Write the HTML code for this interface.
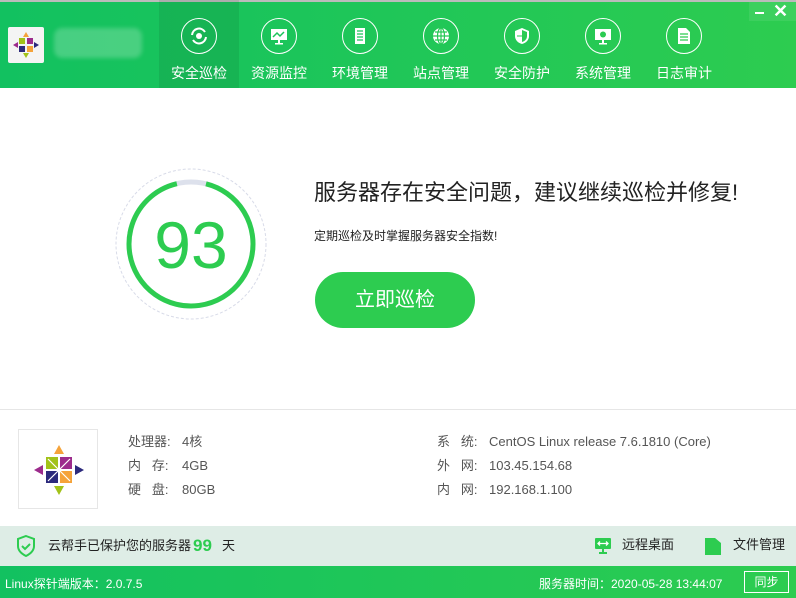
<!DOCTYPE html>
<html><head><meta charset="utf-8"><style>
*{margin:0;padding:0;box-sizing:border-box}
body{width:796px;height:598px;overflow:hidden;position:relative;font-family:"Liberation Sans","Noto Sans CJK SC",sans-serif;background:#fff}
.hdr{position:absolute;left:0;top:0;width:796px;height:88px;background:linear-gradient(90deg,#12c160,#2dcc50)}
.tab{position:absolute;top:0;width:80px;height:88px;color:#fff;font-size:14px;text-align:center}
.tab .c{position:absolute;left:22px;top:18px;width:36px;height:36px;border:1.5px solid #fff;border-radius:50%}
.tab .c svg{position:absolute;left:8px;top:8px}
.tab span{position:absolute;left:0;right:0;top:63px}
.abs{position:absolute}
.lbl{font-size:13px;color:#555}
</style></head><body>
<div class="hdr"></div>
<div class="abs" style="left:0;top:0;width:796px;height:2px;background:#bbb"></div>
<div class="abs" style="left:8px;top:27px;width:36px;height:36px;background:#f4f4f4;border-radius:2px">
<svg width="36" height="36" viewBox="0 0 36 36"><rect x="11" y="11" width="6" height="6" fill="#a2c219"/><rect x="19" y="11" width="6" height="6" fill="#9c2b8c"/><rect x="11" y="19" width="6" height="6" fill="#2c2a7c"/><rect x="19" y="19" width="6" height="6" fill="#f5a33a"/><path d="M18 5l3 5h-6z" fill="#f5a33a"/><path d="M18 31l3-5h-6z" fill="#a2c219"/><path d="M5 18l5-3v6z" fill="#9c2b8c"/><path d="M31 18l-5-3v6z" fill="#2c2a7c"/></svg></div>
<div class="abs" style="left:54px;top:28px;width:88px;height:30px;background:rgba(255,255,255,.22);border-radius:8px;filter:blur(2px)"></div>
<div class="abs" style="left:159px;top:0;width:80px;height:88px;background:rgba(0,0,0,.08)"></div>
<div class="tab" style="left:159px"><div class="c"><svg width="18" height="18" viewBox="0 0 18 18"><circle cx="9" cy="9" r="3" fill="#fff"/><path d="M2 8a7 7 0 0 1 13-3M16 10a7 7 0 0 1-13 3" stroke="#fff" stroke-width="2" fill="none"/></svg></div><span>安全巡检</span></div>
<div class="tab" style="left:239px"><div class="c"><svg width="18" height="18" viewBox="0 0 18 18"><rect x="1" y="2" width="16" height="11" fill="#fff"/><path d="M3 10l4-4 3 3 4-4" stroke="#1bc45a" stroke-width="1.5" fill="none"/><rect x="8" y="13" width="2" height="3" fill="#fff"/><rect x="5" y="16" width="8" height="1.5" fill="#fff"/></svg></div><span>资源监控</span></div>
<div class="tab" style="left:320px"><div class="c"><svg width="18" height="18" viewBox="0 0 18 18"><rect x="4" y="1" width="10" height="16" fill="#fff"/><path d="M6 4h6M6 7h6M6 10h6M6 13h6" stroke="#1bc45a" stroke-width="1.2"/></svg></div><span>环境管理</span></div>
<div class="tab" style="left:401px"><div class="c"><svg width="18" height="18" viewBox="0 0 18 18"><circle cx="9" cy="9" r="8" fill="#fff"/><path d="M1 9h16M9 1v16M3 5h12M3 13h12" stroke="#25c855" stroke-width="1.2"/><ellipse cx="9" cy="9" rx="3.5" ry="8" stroke="#25c855" fill="none" stroke-width="1.2"/></svg></div><span>站点管理</span></div>
<div class="tab" style="left:482px"><div class="c"><svg width="18" height="18" viewBox="0 0 18 18"><path d="M9 1l7 3v5c0 4-3 7-7 8-4-1-7-4-7-8V4z" fill="#fff"/><path d="M9 3v12c3-1 5-3 5-6V5z" fill="#2acb52"/><path d="M4 9h5" stroke="#2acb52"/></svg></div><span>安全防护</span></div>
<div class="tab" style="left:563px"><div class="c"><svg width="18" height="18" viewBox="0 0 18 18"><rect x="1" y="2" width="16" height="11" fill="#fff"/><circle cx="9" cy="7.5" r="3" fill="#2bcb52"/><rect x="8" y="13" width="2" height="3" fill="#fff"/><rect x="5" y="16" width="8" height="1.5" fill="#fff"/></svg></div><span>系统管理</span></div>
<div class="tab" style="left:644px"><div class="c"><svg width="18" height="18" viewBox="0 0 18 18"><path d="M3 1h8l4 4v12H3z" fill="#fff"/><path d="M5 7h8M5 10h8M5 13h8" stroke="#2ccc50" stroke-width="1.2"/></svg></div><span>日志审计</span></div>
<div class="abs" style="left:749px;top:2px;width:47px;height:19px;background:rgba(255,255,255,.08)"></div>
<div class="abs" style="left:755px;top:12px;width:9px;height:2px;background:#fff"></div>
<div class="abs" style="left:773px;top:1px;color:#fff;font-size:18px;font-weight:bold">✕</div>

<svg class="abs" style="left:111px;top:164px" width="160" height="160" viewBox="0 0 160 160">
<circle cx="80" cy="80" r="75" fill="none" stroke="#d8dbe8" stroke-dasharray="3 2"/>
<circle cx="80" cy="80" r="62" fill="none" stroke="#dde1ec" stroke-width="5"/>
<circle cx="80" cy="80" r="62" fill="none" stroke="#2dcc50" stroke-width="5" stroke-dasharray="360 30" transform="rotate(-76 80 80)"/>
<text x="80" y="104" text-anchor="middle" font-family="Liberation Sans" font-size="66" fill="#2dcc50">93</text>
</svg>
<div class="abs" style="left:314px;top:175px;font-size:22px;color:#222">服务器存在安全问题，建议继续巡检并修复!</div>
<div class="abs" style="left:314px;top:227px;font-size:12px;color:#222">定期巡检及时掌握服务器安全指数!</div>
<div class="abs" style="left:315px;top:272px;width:160px;height:56px;border-radius:28px;background:#2dcc50;color:#fff;font-size:20px;text-align:center;line-height:56px">立即巡检</div>

<div class="abs" style="left:0;top:409px;width:796px;height:1px;background:#e6e6e6"></div>
<div class="abs" style="left:18px;top:429px;width:80px;height:80px;border:1px solid #e6e6e6;background:#fff">
<svg width="80" height="80" viewBox="0 0 80 80"><rect x="27" y="27" width="12" height="12" fill="#a2c219"/><rect x="41" y="27" width="12" height="12" fill="#9c2b8c"/><rect x="27" y="41" width="12" height="12" fill="#2c2a7c"/><rect x="41" y="41" width="12" height="12" fill="#f5a33a"/><path d="M15 40l9-5v10z" fill="#9c2b8c"/><path d="M40 15l5 9h-10z" fill="#f5a33a"/><path d="M40 65l5-9h-10z" fill="#a2c219"/><path d="M65 40l-9-5v10z" fill="#2c2a7c"/><path d="M27 40h26M40 27v26M29 29l22 22M51 29l-22 22" stroke="#fff" stroke-width="1.2"/></svg></div>
<div class="abs lbl" style="left:128px;top:430px;line-height:24px">处理器:<br>内&nbsp;&nbsp;&nbsp;存:<br>硬&nbsp;&nbsp;&nbsp;盘:</div>
<div class="abs lbl" style="left:182px;top:430px;line-height:24px">4核<br>4GB<br>80GB</div>
<div class="abs lbl" style="left:437px;top:430px;line-height:24px">系&nbsp;&nbsp;&nbsp;统:<br>外&nbsp;&nbsp;&nbsp;网:<br>内&nbsp;&nbsp;&nbsp;网:</div>
<div class="abs lbl" style="left:489px;top:430px;line-height:24px">CentOS Linux release 7.6.1810 (Core)<br>103.45.154.68<br>192.168.1.100</div>

<div class="abs" style="left:0;top:526px;width:796px;height:40px;background:#deede6"></div>
<svg class="abs" style="left:16px;top:535px" width="20" height="22" viewBox="0 0 20 22"><path d="M10 1l8 3v7c0 5-4 8-8 10-4-2-8-5-8-10V4z" fill="none" stroke="#2dcc50" stroke-width="2"/><path d="M6 11l3 3 5-5" stroke="#2dcc50" stroke-width="2" fill="none"/></svg>
<div class="abs" style="left:48px;top:536px;font-size:13px;color:#222;line-height:20px">云帮手已保护您的服务器</div>
<div class="abs" style="left:193px;top:536px;font-size:17px;font-weight:bold;color:#2dcc50;line-height:20px">99</div>
<div class="abs" style="left:222px;top:536px;font-size:13px;color:#222;line-height:20px">天</div>
<svg class="abs" style="left:594px;top:537px" width="18" height="18" viewBox="0 0 18 18"><rect x="1" y="1" width="16" height="11" rx="1" fill="#2dcc50"/><path d="M4 6.5h10M6 4.5l-2 2 2 2M12 4.5l2 2-2 2" stroke="#fff" stroke-width="1.3" fill="none"/><rect x="8" y="12" width="2" height="3" fill="#2dcc50"/><rect x="5" y="15" width="8" height="2" fill="#2dcc50"/></svg>
<div class="abs" style="left:622px;top:535px;font-size:13px;color:#222;line-height:20px">远程桌面</div>
<svg class="abs" style="left:704px;top:537px" width="18" height="18" viewBox="0 0 18 18"><path d="M1 1h10l6 5v12H1z" fill="#2dcc50"/></svg>
<div class="abs" style="left:733px;top:535px;font-size:13px;color:#222;line-height:20px">文件管理</div>

<div class="abs" style="left:0;top:566px;width:796px;height:32px;background:linear-gradient(90deg,#12c160,#2dcc50)"></div>
<div class="abs" style="left:5px;top:575px;font-size:12px;color:#fff">Linux探针端版本：2.0.7.5</div>
<div class="abs" style="left:539px;top:575px;font-size:12px;color:#fff">服务器时间：2020-05-28 13:44:07</div>
<div class="abs" style="left:744px;top:571px;width:45px;height:22px;border:1px solid #fff;color:#fff;font-size:12px;text-align:center;line-height:20px">同步</div>
</body></html>
